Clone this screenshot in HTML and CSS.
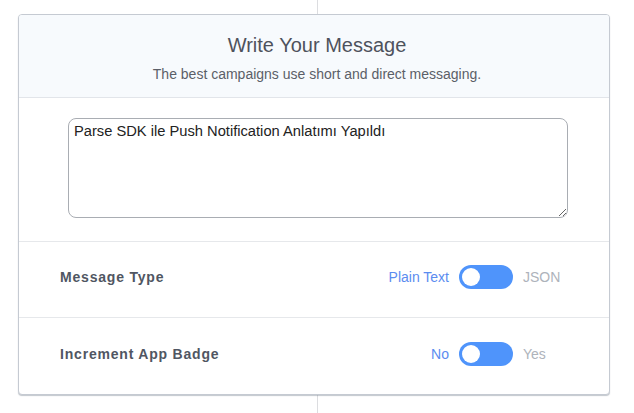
FILE: index.html
```html
<!DOCTYPE html>
<html>
<head>
<meta charset="utf-8">
<link rel="stylesheet" href="styles.css">
</head>
<body>
<div class="page">
  <div class="card">
    <div class="card-header">
      <h1 class="title">Write Your Message</h1>
      <p class="subtitle">The best campaigns use short and direct messaging.</p>
    </div>
    <div class="message-section">
      <textarea class="message-input" spellcheck="true">Parse SDK ile Push Notification Anlatımı Yapıldı</textarea>
    </div>
    <div class="option-row">
      <span class="option-label">Message Type</span>
      <div class="switch-group">
        <span class="switch-on-label">Plain Text</span>
        <span class="switch"><span class="knob"></span></span>
        <span class="switch-off-label">JSON</span>
      </div>
    </div>
    <div class="option-row">
      <span class="option-label">Increment App Badge</span>
      <div class="switch-group">
        <span class="switch-on-label">No</span>
        <span class="switch"><span class="knob"></span></span>
        <span class="switch-off-label">Yes</span>
      </div>
    </div>
  </div>
</div>
</body>
</html>
```

FILE: styles.css
```css
html, body {
  margin: 0;
  padding: 0;
  background: #ffffff;
}
body {
  font-family: "Liberation Sans", Arial, sans-serif;
  width: 634px;
  height: 413px;
  overflow: hidden;
}
.page {
  height: 413px;
  padding: 14px 0 0 18px;
  box-sizing: border-box;
  background: linear-gradient(#dcdde0, #dcdde0) no-repeat 317px 0 / 1px 100%;
}
.card {
  width: 592px;
  box-sizing: border-box;
  border: 1px solid #c5cad2;
  border-radius: 4px;
  background: #ffffff;
  box-shadow: 0 1px 1px rgba(120, 130, 145, 0.45);
  overflow: hidden;
}
.card-header {
  background: #f7fafd;
  border-bottom: 1px solid #e2e5ea;
  height: 83px;
  box-sizing: border-box;
  text-align: center;
  padding: 18px 0 0 6px;
}
.title {
  margin: 0;
  font-size: 20px;
  font-weight: normal;
  color: #4e525c;
  line-height: 24px;
}
.subtitle {
  margin: 9px 0 0 0;
  font-size: 14px;
  color: #5b5f68;
  line-height: 17px;
}
.message-section {
  padding: 20px 41px 23px 49px;
  border-bottom: 1px solid #e6e8eb;
}
.message-input {
  display: block;
  width: 500px;
  height: 100px;
  box-sizing: border-box;
  border: 1px solid #a9adb3;
  border-radius: 8px;
  padding: 4px 5px;
  font-family: "Liberation Sans", Arial, sans-serif;
  font-size: 14.7px;
  color: #222;
  resize: vertical;
  outline: none;
}
.option-row {
  height: 76px;
  box-sizing: border-box;
  display: flex;
  align-items: center;
  justify-content: space-between;
  padding: 0 49px 5px 41px;
  border-bottom: 1px solid #e6e8eb;
}
.option-row:last-child {
  border-bottom: none;
}
.option-label {
  font-size: 14px;
  font-weight: bold;
  letter-spacing: 0.8px;
  color: #505662;
}
.switch-group {
  display: flex;
  align-items: center;
  font-size: 14px;
}
.switch-on-label {
  color: #5b8cf0;
}
.switch-off-label {
  color: #aeb3bb;
  width: 37px;
}
.switch {
  display: block;
  width: 54px;
  height: 24px;
  border-radius: 12px;
  background: #4f94fb;
  margin: 0 10px;
  position: relative;
}
.knob {
  position: absolute;
  left: 3px;
  top: 3px;
  width: 18px;
  height: 18px;
  border-radius: 50%;
  background: #ffffff;
}
```
